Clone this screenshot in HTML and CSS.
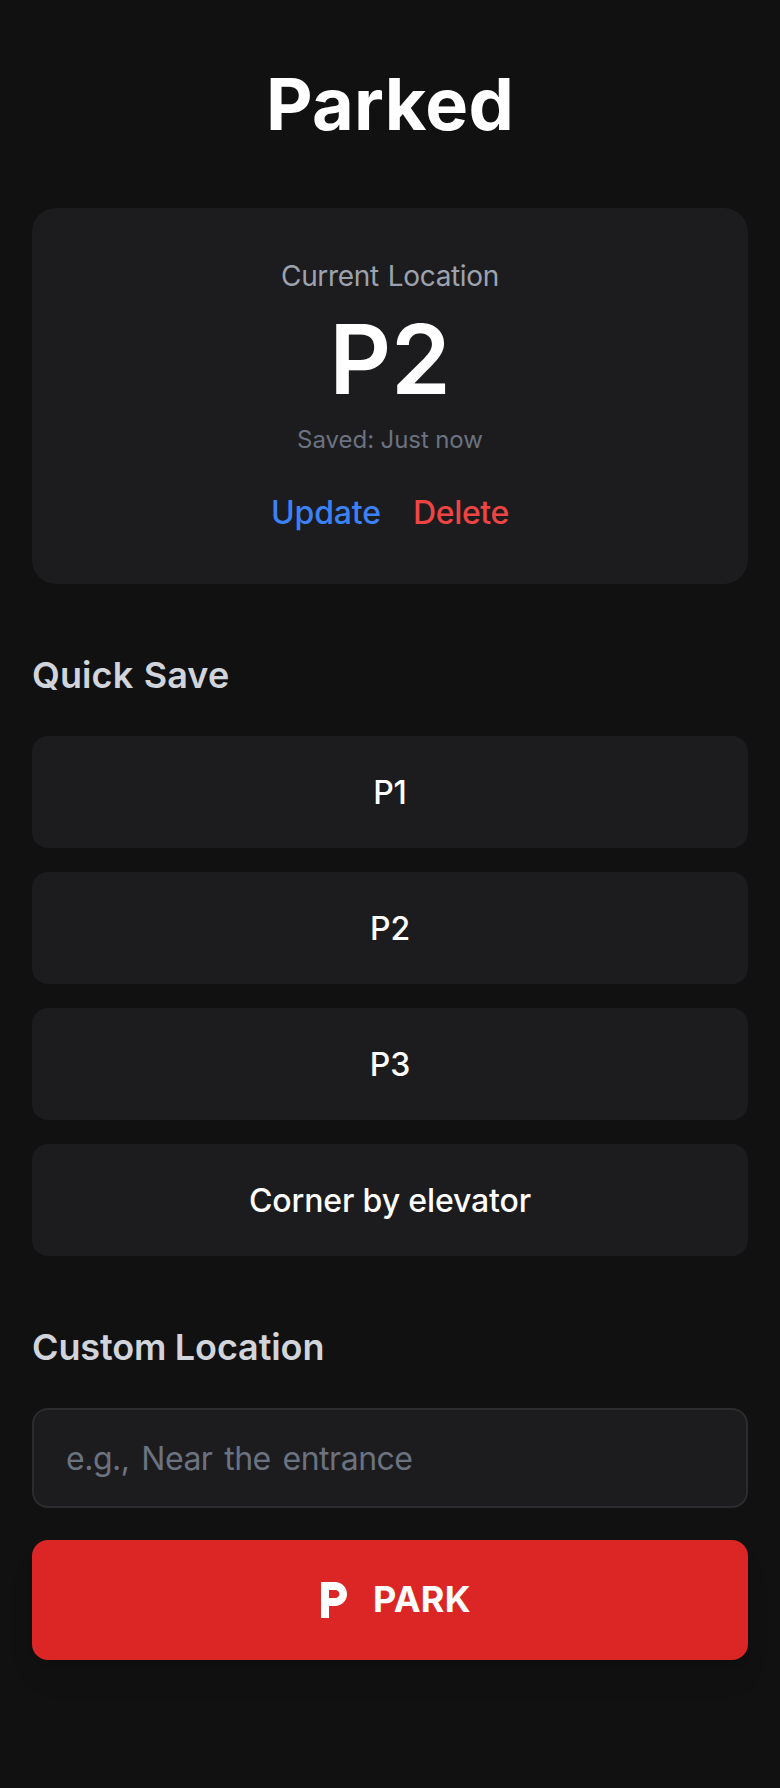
FILE: index.html
```
<!DOCTYPE html>
<html lang="en">
<head>
<meta charset="utf-8">
<title>Parked</title>
<link rel="stylesheet" href="styles.css">
</head>
<body>
<main class="app">
  <h1 class="title">Parked</h1>
  <section class="card">
    <p class="label">Current Location</p>
    <p class="spot">P2</p>
    <p class="saved">Saved: Just now</p>
    <div class="actions">
      <button class="link update">Update</button>
      <button class="link delete">Delete</button>
    </div>
  </section>
  <section class="quick">
    <h2 class="heading heading-quick">Quick Save</h2>
    <div class="list">
      <button class="option">P1</button>
      <button class="option">P2</button>
      <button class="option">P3</button>
      <button class="option">Corner by elevator</button>
    </div>
  </section>
  <section class="custom">
    <h2 class="heading heading-custom">Custom Location</h2>
    <input class="field" type="text" placeholder="e.g., Near the entrance">
    <button class="park">
      <svg class="park-icon" viewBox="0 0 24 24" fill="currentColor"><path d="M13 3H6v18h4v-6h3c3.31 0 6-2.69 6-6s-2.69-6-6-6zm.2 8H10V7h3.2c1.1 0 2 .9 2 2s-.9 2-2 2z"/></svg>
      <span class="park-text">PARK</span>
    </button>
  </section>
</main>
</body>
</html>
```
FILE: styles.css
```
* { box-sizing: border-box; margin: 0; padding: 0; }
body {
  min-height: 1788px;
  background: #111111;
  color: #fff;
  font-family: Inter, sans-serif;
}
button { border: 0; background: none; color: inherit; font-family: inherit; }
.app { padding: 64px 32px 0; }
.title { font-size: 72px; line-height: 80px; font-weight: 700; letter-spacing: .28px; text-align: center; }
.card {
  margin-top: 64px;
  height: 376px;
  padding: 48px;
  border-radius: 24px;
  background: #1c1c1e;
  text-align: center;
}
.label { font-size: 28px; line-height: 40px; letter-spacing: -.35px; word-spacing: 1.6px; color: #9ca3af; }
.spot { margin: 15px 0 17px; font-size: 96px; line-height: 96px; font-weight: 600; }
.saved { font-size: 24px; line-height: 32px; word-spacing: -.5px; color: #6b7280; }
.actions { display: flex; justify-content: center; gap: 32px; margin-top: 33px; }
.link { font-size: 32px; line-height: 48px; font-weight: 500; }
.update { letter-spacing: -.13px; color: #3b82f6; }
.delete { letter-spacing: -.35px; color: #ef4444; }
.quick, .custom { padding-top: 63px; }
.heading { margin-bottom: 33px; font-size: 36px; line-height: 56px; font-weight: 600; color: #d1d5db; }
.heading-quick { letter-spacing: .1px; word-spacing: 1.2px; }
.heading-custom { letter-spacing: -.1px; word-spacing: -.6px; }
.list { display: grid; gap: 24px; }
.option {
  height: 112px;
  padding-top: 2px;
  border-radius: 16px;
  background: #1c1c1e;
  font-size: 32px;
  line-height: 48px;
  font-weight: 500;
  letter-spacing: -.13px;
}
.field {
  display: block;
  width: 100%;
  height: 100px;
  padding: 0 32px;
  border: 2px solid #2c2c2e;
  border-radius: 16px;
  background: #1c1c1e;
  color: #fff;
  font: 32px/48px Inter, sans-serif;
  letter-spacing: -.48px;
  word-spacing: 3.2px;
}
.field::placeholder { color: #6b7280; opacity: 1; }
.park {
  display: flex;
  align-items: center;
  justify-content: center;
  gap: 16px;
  width: 100%;
  height: 120px;
  margin-top: 32px;
  border-radius: 16px;
  background: #dc2626;
  box-shadow: 0 20px 30px -6px rgba(0, 0, 0, .1), 0 8px 12px -8px rgba(0, 0, 0, .1);
  font-size: 36px;
  line-height: 56px;
  font-weight: 700;
}
.park-icon { width: 48px; height: 48px; }
.park-text { margin-top: -2px; letter-spacing: .3px; }
```
